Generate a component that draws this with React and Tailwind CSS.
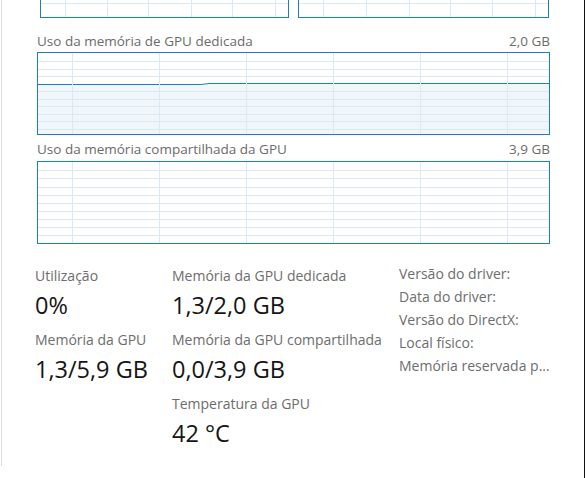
import React from "react";

const BORDER = "#1f7dc1";
const GRID = "#d9e9f5";
const FILL = "#f1f6fb";

function Grid({ w, h, hs, vs, children }) {
  return (
    <svg width={w} height={h} className="block">
      {children}
      {hs.map((y, i) => (
        <line key={"h" + i} x1="0" x2={w} y1={Math.round(y) + 0.5} y2={Math.round(y) + 0.5} stroke={GRID} strokeWidth="1" />
      ))}
      {vs.map((x, i) => (
        <line key={"v" + i} y1="0" y2={h} x1={Math.round(x) + 0.5} x2={Math.round(x) + 0.5} stroke={GRID} strokeWidth="1" />
      ))}
    </svg>
  );
}

const v6 = [34, 121, 208, 295, 382, 469];

function Stat({ label, value, last }) {
  return (
    <div className={last ? "" : "mb-[10px]"}>
      <div className="text-[14px] leading-[20px] text-[#6d6d6d] whitespace-nowrap">{label}</div>
      <div className="mt-[4px] text-[23.5px] leading-[30px] text-[#151515] whitespace-nowrap">{value}</div>
    </div>
  );
}

export default function App() {
  const dedH = [8, 16, 23, 38, 46, 53, 61, 68, 76];
  const shH = [8, 16, 25, 33, 41, 49, 57, 65, 73];
  return (
    <div
      className="w-[585px] h-[478px] bg-white flex overflow-hidden"
      style={{ fontFamily: '"Open Sans", "Noto Sans", sans-serif' }}
    >
      <div className="w-[1px] shrink-0" />
      <div className="w-[1px] h-[466px] shrink-0 bg-[#dcdcdc]" />
      <div className="flex-1 flex flex-col pl-[35px] pr-[34px]">
        {/* top cut graphs */}
        <div className="flex pl-[3px] gap-[9px]">
          <div className="w-[249px] h-[18px] border-x border-b border-[#1f7dc1] overflow-hidden">
            <Grid w={247} h={17} hs={[3]} vs={[24, 66, 107, 150, 191, 234]} />
          </div>
          <div className="w-[251px] h-[18px] border-x border-b border-[#1f7dc1] overflow-hidden">
            <Grid w={249} h={17} hs={[3]} vs={[24, 67, 110, 151, 193, 236]} />
          </div>
        </div>

        {/* dedicated */}
        <div className="mt-[14px] flex justify-between text-[13.5px] leading-[18px] text-[#6b6b6b]">
          <span>Uso da memória de GPU dedicada</span>
          <span>2,0 GB</span>
        </div>
        <div className="mt-[2px] w-[513px] h-[83px] border border-[#1f7dc1]">
          <Grid w={511} h={81} hs={dedH} vs={v6}>
            <path d="M0 31.5 L163 31.5 L171 30.5 L511 30.5 L511 81 L0 81 Z" fill={FILL} />
            <path d="M0 31.5 L163 31.5 L171 30.5 L511 30.5" fill="none" stroke={BORDER} strokeWidth="1" />
          </Grid>
        </div>

        {/* shared */}
        <div className="mt-[5px] flex justify-between text-[13.5px] leading-[18px] text-[#6b6b6b]">
          <span>Uso da memória compartilhada da GPU</span>
          <span>3,9 GB</span>
        </div>
        <div className="mt-[3px] w-[513px] h-[83px] border border-[#1f7dc1]">
          <Grid w={511} h={81} hs={shH} vs={v6} />
        </div>

        {/* stats */}
        <div className="mt-[17px] -ml-[2px] flex">
          <div className="w-[137px] shrink-0 pt-[5px]">
            <Stat label="Utilização" value="0%" />
            <Stat label="Memória da GPU" value="1,3/5,9 GB" />
          </div>
          <div className="w-[227px] shrink-0 pt-[5px]">
            <Stat label="Memória da GPU dedicada" value="1,3/2,0 GB" />
            <Stat label="Memória da GPU compartilhada" value="0,0/3,9 GB" />
            <Stat label="Temperatura da GPU" value="42 °C" last />
          </div>
          <div className="pt-[1px] flex flex-col text-[14px] leading-[23px] text-[#6d6d6d] whitespace-nowrap">
            <span>Versão do driver:</span>
            <span>Data do driver:</span>
            <span>Versão do DirectX:</span>
            <span>Local físico:</span>
            <span>Memória reservada p...</span>
          </div>
        </div>
      </div>
      <div className="w-[2px] h-full shrink-0 bg-[#111]" />
    </div>
  );
}
